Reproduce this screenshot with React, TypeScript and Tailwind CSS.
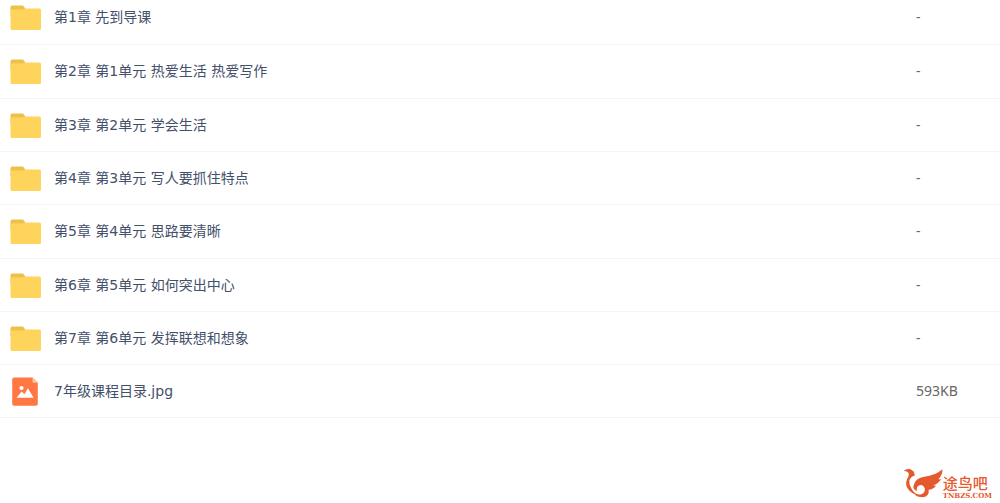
type Entry = { name: string; size: string; kind: 'folder' | 'image' };

const entries: Entry[] = [
  { name: '第1章 先到导课', size: '-', kind: 'folder' },
  { name: '第2章 第1单元 热爱生活 热爱写作', size: '-', kind: 'folder' },
  { name: '第3章 第2单元 学会生活', size: '-', kind: 'folder' },
  { name: '第4章 第3单元 写人要抓住特点', size: '-', kind: 'folder' },
  { name: '第5章 第4单元 思路要清晰', size: '-', kind: 'folder' },
  { name: '第6章 第5单元 如何突出中心', size: '-', kind: 'folder' },
  { name: '第7章 第6单元 发挥联想和想象', size: '-', kind: 'folder' },
  { name: '7年级课程目录.jpg', size: '593KB', kind: 'image' },
];

function FolderIcon() {
  return (
    <svg width="32" height="32" viewBox="0 0 32 32" aria-hidden="true">
      <path d="M0.5 15V6.2Q0.5 4.5 2.2 4.5H12.2Q13.3 4.5 13.9 5.4L16 8.5V15Z" fill="#ecc04a" />
      <path d="M0.5 9.5Q0.5 8.6 1.5 8.6H12.6L15 7.5H29.5Q31 7.5 31 9V27.5Q31 29 29.5 29H2Q0.5 29 0.5 27.5Z" fill="#ffd45c" />
    </svg>
  );
}

function ImageIcon() {
  return (
    <svg width="32" height="32" viewBox="0 0 32 32" aria-hidden="true">
      <path d="M4.3 2.5H22.5L27.8 7.8V28.7Q27.8 30.8 25.7 30.8H4.3Q2.2 30.8 2.2 28.7V4.6Q2.2 2.5 4.3 2.5Z" fill="#ff7844" />
      <path d="M22.5 2.5L27.8 7.8H24.1Q22.5 7.8 22.5 6.2Z" fill="#ffc4a8" />
      <circle cx="11.5" cy="13" r="2.1" fill="#fff" />
      <path d="M6.5 22.7L11.7 16.4L14.4 19.2L17.9 13.2L23.6 22.7Z" fill="#fff" />
    </svg>
  );
}

function BirdLogo() {
  return (
    <svg width="40" height="31" viewBox="0 0 120 93" aria-hidden="true" fill="#e4592e">
      <path d="M2 9Q8 2 20 3Q35 7 35 23Q23 25 19 37Q17 58 40 81Q20 74 12 58Q5 42 16 26Q20 18 15 13Q10 9 2 9Z" />
      <path d="M32 52Q37 30 64 26Q96 24 118 4Q120 20 106 34Q112 33 114 34Q106 48 90 52Q98 52 99 53Q91 64 77 65Q80 86 57 88Q36 88 27 67Q40 83 55 79Q68 74 65 60Q60 49 50 52Q39 55 42 69Q28 65 32 52Z" />
    </svg>
  );
}

export default function App() {
  return (
    <main className="flex min-h-screen flex-col overflow-hidden bg-white font-['DejaVu_Sans','Noto_Sans_CJK_SC',sans-serif] text-sm">
      <table className="-mt-[9px] w-full table-fixed border-collapse">
        <tbody>
          {entries.map((entry) => (
            <tr key={entry.name} className="h-[53px] border-b border-[#f5f5f6] nth-2:h-[54px] nth-5:h-[54px]">
              <td className="p-0">
                <a href="#" className="flex items-center gap-3 pl-[10px] text-[#44506a]">
                  {entry.kind === 'folder' ? <FolderIcon /> : <ImageIcon />}
                  <span>{entry.name}</span>
                </a>
              </td>
              <td className="w-[84px] p-0 font-['Noto_Sans',sans-serif] text-[#666]">{entry.size}</td>
            </tr>
          ))}
        </tbody>
      </table>
      <footer className="mt-auto flex items-end justify-end pr-2 pb-1">
        <BirdLogo />
        <div className="text-[#e4592e]">
          <div className="text-[15px] leading-[18px] font-medium font-['Noto_Sans_CJK_SC',sans-serif]">途鸟吧</div>
          <div className="text-[7px] leading-[7px] font-bold font-['DejaVu_Serif',serif]">TNBZS.COM</div>
        </div>
      </footer>
    </main>
  );
}
